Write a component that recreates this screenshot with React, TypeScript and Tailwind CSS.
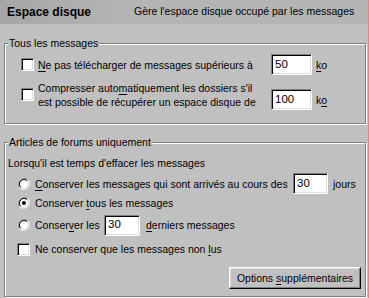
import type { ReactNode } from "react";

const font = { fontFamily: '"Liberation Sans", Arial, sans-serif' };

function U({ children }: { children: ReactNode }) {
  return <span className="underline underline-offset-[2px]">{children}</span>;
}

function CheckBox() {
  return (
    <div className="w-[13px] h-[13px] shrink-0 bg-white border border-t-[#808080] border-l-[#808080] border-r-white border-b-white shadow-[inset_1px_1px_0_#000,inset_-1px_-1px_0_#dfdfdf]" />
  );
}

function Radio({ checked = false }: { checked?: boolean }) {
  return (
    <svg width="12" height="12" viewBox="0 0 12 12" className="shrink-0">
      <path d="M11 2.5 A5.5 5.5 0 0 0 2.5 11" fill="none" stroke="#808080" strokeWidth="1" />
      <path d="M1 9.5 A5.5 5.5 0 0 0 9.5 1" fill="none" stroke="#ffffff" strokeWidth="1" />
      <circle cx="6" cy="6" r="4.5" fill="#fff" />
      <path d="M9.2 2.8 A4.5 4.5 0 0 0 2.8 9.2" fill="none" stroke="#000" strokeWidth="1" />
      <path d="M2.8 9.2 A4.5 4.5 0 0 0 9.2 2.8" fill="none" stroke="#dfdfdf" strokeWidth="1" />
      <circle cx="6" cy="6" r="3.6" fill="#fff" />
      {checked && <circle cx="6" cy="6" r="2" fill="#000" />}
    </svg>
  );
}

function Field({ value, className = "" }: { value: string; className?: string }) {
  return (
    <div
      className={`h-[21px] shrink-0 bg-white border border-t-[#808080] border-l-[#808080] border-r-white border-b-white shadow-[inset_1px_1px_0_#000,inset_-1px_-1px_0_#dfdfdf] flex items-center pl-[3px] text-[11.5px] leading-none ${className}`}
    >
      {value}
    </div>
  );
}

function Group({ label, className, children }: { label: string; className: string; children: ReactNode }) {
  return (
    <div
      className={`relative ml-[4px] w-[362px] border border-[#808080] shadow-[1px_1px_0_#fff,inset_1px_1px_0_#fff] ${className}`}
    >
      <span className="absolute -top-[8px] left-[3px] bg-[#c0c0c0] px-[1px] leading-[14px] whitespace-nowrap">
        {label}
      </span>
      {children}
    </div>
  );
}

export default function App() {
  return (
    <div
      className="w-[369px] h-[298px] bg-[#c0c0c0] border-r border-[#d48a8a] overflow-hidden text-black text-[10.5px] whitespace-nowrap"
      style={font}
    >
      <div className="h-[24px] flex items-center bg-[linear-gradient(to_right,#a6a6a6,#b4b4b4_34%,#b4b4b4)]">
        <span className="w-[134px] pl-[7px] font-bold text-[12px]">Espace disque</span>
        <span>Gère l'espace disque occupé par les messages</span>
      </div>

      <Group label="Tous les messages" className="mt-[19px] h-[81px]">
        <div className="mt-[10px] h-[21px] flex items-center pl-[16px]">
          <CheckBox />
          <span className="ml-[4px] w-[233px] leading-[14px]">
            <U>N</U>e pas télécharger de messages supérieurs à
          </span>
          <Field value="50" className="w-[41px]" />
          <span className="ml-[4px] leading-[14px]">
            <U>k</U>o
          </span>
        </div>
        <div className="mt-[6px] flex items-start pl-[16px]">
          <div className="mt-[7px]">
            <CheckBox />
          </div>
          <span className="ml-[4px] w-[233px] leading-[14px]">
            Compresser auto<U>m</U>atiquement les dossiers s'il
            <br />
            est possible de récupérer un espace disque de
          </span>
          <Field value="100" className="w-[41px] mt-[8px]" />
          <span className="ml-[4px] mt-[12px] leading-[14px]">
            k<U>o</U>
          </span>
        </div>
      </Group>

      <Group label="Articles de forums uniquement" className="mt-[18px] h-[155px]">
        <div className="mt-[13px] pl-[3px] leading-[14px]">Lorsqu'il est temps d'effacer les messages</div>
        <div className="mt-[3px] h-[21px] flex items-center pl-[13px]">
          <Radio />
          <span className="ml-[5px] w-[258px] leading-[14px]">
            <U>C</U>onserver les messages qui sont arrivés au cours des
          </span>
          <Field value="30" className="w-[35px]" />
          <span className="ml-[5px] leading-[14px]">jours</span>
        </div>
        <div className="mt-[2px] h-[14px] flex items-center pl-[13px]">
          <Radio checked />
          <span className="ml-[5px] leading-[14px]">
            Conserver <U>t</U>ous les messages
          </span>
        </div>
        <div className="mt-[5px] h-[20px] flex items-center pl-[13px]">
          <Radio />
          <span className="ml-[5px] w-[69px] leading-[14px]">
            Conser<U>v</U>er les
          </span>
          <Field value="30" className="w-[36px] h-[20px]" />
          <span className="ml-[6px] leading-[14px]">
            <U>d</U>erniers messages
          </span>
        </div>
        <div className="mt-[7px] h-[14px] flex items-center pl-[12px]">
          <CheckBox />
          <span className="ml-[5px] leading-[14px]">
            Ne conserver que les messages non <U>l</U>us
          </span>
        </div>
        <div className="mt-[11px] flex justify-end pr-[4px]">
          <button className="w-[132px] h-[22px] bg-[#c0c0c0] border border-t-white border-l-white border-r-black border-b-black shadow-[inset_-1px_-1px_0_#808080,inset_1px_1px_0_#dfdfdf] leading-none">
            Options <U>s</U>upplémentaires
          </button>
        </div>
      </Group>
    </div>
  );
}
